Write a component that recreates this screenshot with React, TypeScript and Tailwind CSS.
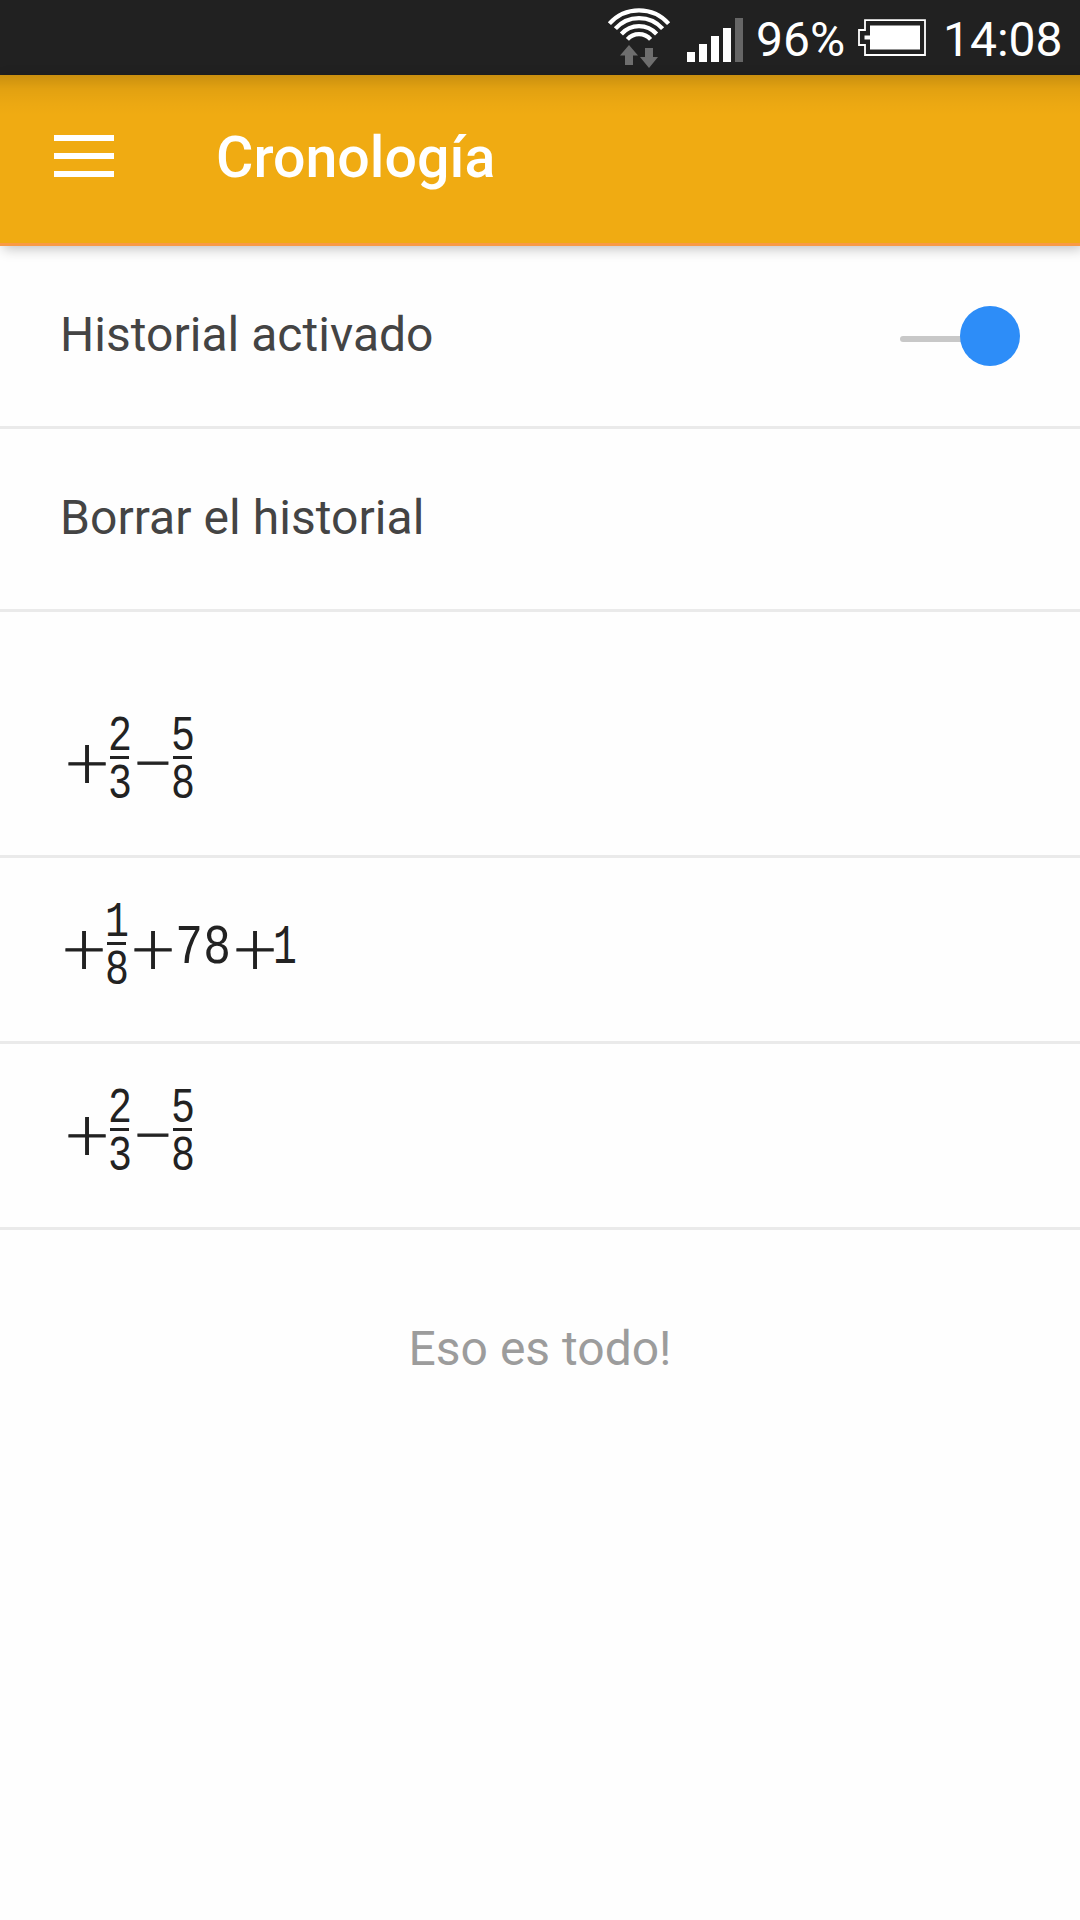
import { ReactNode } from "react";

interface FractionProps {
  top: string;
  bottom: string;
}

function Plus() {
  return (
    <span className="flex h-[60px] w-[36px] items-center justify-center pb-[3px] font-['DejaVu_Sans',sans-serif] text-[58px] font-extralight leading-none [-webkit-text-stroke:1px_#222]">
      +
    </span>
  );
}

function Minus() {
  return (
    <span className="flex h-[60px] w-[30px] scale-x-[0.86] items-center justify-center pb-[3px] font-['DejaVu_Sans',sans-serif] text-[56px] font-extralight leading-none [-webkit-text-stroke:1px_#222]">
      −
    </span>
  );
}

function SmallDigit({ children }: { children: ReactNode }) {
  return (
    <span className="flex h-[33px] scale-x-[0.8] items-center justify-center pt-[6px] text-[50px] leading-none">
      {children}
    </span>
  );
}

function Fraction({ top, bottom }: FractionProps) {
  return (
    <div className="flex w-[19px] flex-col items-center gap-[6px] pb-3">
      <SmallDigit>{top}</SmallDigit>
      <span className="h-[3px] w-full bg-[#222]" />
      <SmallDigit>{bottom}</SmallDigit>
    </div>
  );
}

function Digit({ children }: { children: ReactNode }) {
  return (
    <span className="flex w-[28px] scale-x-[0.84] items-center justify-center pb-[2px] text-[55px] leading-none">
      {children}
    </span>
  );
}

function Formula({ children }: { children: ReactNode }) {
  return (
    <div className="flex h-[183px] items-center font-['Liberation_Mono',monospace] text-[#222]">
      {children}
    </div>
  );
}

function DifferenceFormula() {
  return (
    <Formula>
      <div className="ml-[69px] flex items-center">
        <Plus />
        <div className="ml-[5px]">
          <Fraction top="2" bottom="3" />
        </div>
        <div className="ml-[9px]">
          <Minus />
        </div>
        <div className="ml-[5px]">
          <Fraction top="5" bottom="8" />
        </div>
      </div>
    </Formula>
  );
}

function SumFormula() {
  return (
    <Formula>
      <div className="ml-[66px] flex items-center">
        <Plus />
        <div className="ml-[5px]">
          <Fraction top="1" bottom="8" />
        </div>
        <div className="ml-[9px]">
          <Plus />
        </div>
        <div className="ml-[4px] flex">
          <Digit>7</Digit>
          <Digit>8</Digit>
        </div>
        <div className="ml-[6px] mr-[-2px]">
          <Plus />
        </div>
        <div className="scale-x-[0.86]">
          <Digit>1</Digit>
        </div>
      </div>
    </Formula>
  );
}

function WifiIcon() {
  return (
    <svg width="64" height="64" viewBox="0 0 64 64" fill="none">
      <g stroke="#fff" strokeWidth="4.2">
        <path d="M2.400 16.700A39.500 39.500 0 0 1 61.600 16.700" />
        <path d="M8.400 21.700A31.500 31.500 0 0 1 55.600 21.700" />
        <path d="M14.400 27A23.500 23.500 0 0 1 49.600 27" />
        <path d="M20.400 32.300A15.500 15.500 0 0 1 43.600 32.300" />
      </g>
      <g fill="#6e6e6e">
        <path d="M22 38l9 10.500h-5V58h-8v-9.500h-5z" />
        <path d="M42 61l-9-11h5v-9h8v9h5z" />
      </g>
    </svg>
  );
}

function BatteryIcon() {
  return (
    <svg width="68" height="38" viewBox="0 0 68 38" fill="none">
      <path d="M7 1.200h60v34.800H7V26H1V11h6z" stroke="#fff" strokeWidth="1.8" />
      <path d="M12 6.500h50v24H12V20.500H6.500v-4H12z" fill="#fff" />
    </svg>
  );
}

function StatusBar() {
  return (
    <div className="flex h-[75px] bg-[#212121] text-[48px] leading-none text-white">
      <div className="ml-[607px] mt-[7px]">
        <WifiIcon />
      </div>
      <div className="ml-4 mt-[18px] flex h-[44px] items-end gap-1">
        <span className="h-[10px] w-2 bg-white" />
        <span className="h-[18px] w-2 bg-white" />
        <span className="h-[26px] w-2 bg-white" />
        <span className="h-[34px] w-2 bg-white" />
        <span className="h-[44px] w-2 bg-[#666]" />
      </div>
      <span className="ml-[13px] mt-[16px] w-[90px]">96%</span>
      <div className="ml-[12px] mt-[19px]">
        <BatteryIcon />
      </div>
      <span className="ml-[17px] mt-[16px]">14:08</span>
    </div>
  );
}

function Header() {
  return (
    <header className="relative flex h-[171px] items-center border-b-[3px] border-[#f99a45] bg-[#f0ab12] bg-[linear-gradient(to_bottom,rgba(0,0,0,0.16),rgba(0,0,0,0.06)_14px,rgba(0,0,0,0.02)_28px,transparent_40px)] pl-[54px] shadow-[3px_3px_12px_rgba(0,0,0,0.24)]">
      <button className="flex w-[60px] flex-col gap-3 pb-1.5" aria-label="Menú">
        <span className="h-1.5 bg-white" />
        <span className="h-1.5 bg-white" />
        <span className="h-1.5 bg-white" />
      </button>
      <h1 className="ml-[102px] pb-0.5 text-[57.3px] font-medium leading-none text-white">
        Cronología
      </h1>
    </header>
  );
}

function Toggle() {
  return (
    <button
      className="relative flex h-[60px] w-[120px] items-center justify-end"
      role="switch"
      aria-checked="true"
      aria-label="Historial"
    >
      <span className="absolute left-0 top-[30px] h-1.5 w-[90px] rounded-full bg-[#c8c8c8]" />
      <span className="relative size-[60px] rounded-full bg-[#2d8df8]" />
    </button>
  );
}

function Row({ children }: { children: ReactNode }) {
  return <div className="border-b-[3px] border-[#eaeaea]">{children}</div>;
}

export default function App() {
  return (
    <div className="min-h-[1920px] w-[1080px] overflow-hidden bg-[#fefefe] font-['Roboto',sans-serif]">
      <StatusBar />
      <Header />
      <main className="text-[48px] leading-none text-[#444]">
        <Row>
          <div className="flex h-[180px] items-center justify-between px-[60px]">
            <span className="pb-0.5 tracking-[0.03px]">Historial activado</span>
            <Toggle />
          </div>
        </Row>
        <Row>
          <div className="flex h-[180px] items-center px-[60px] pb-0.5 tracking-[0.05px]">
            Borrar el historial
          </div>
        </Row>
        <div className="pt-[60px]">
          <Row>
            <DifferenceFormula />
          </Row>
          <Row>
            <SumFormula />
          </Row>
          <Row>
            <DifferenceFormula />
          </Row>
        </div>
        <p className="pt-[95px] text-center text-[#9c9c9c]">Eso es todo!</p>
      </main>
    </div>
  );
}
